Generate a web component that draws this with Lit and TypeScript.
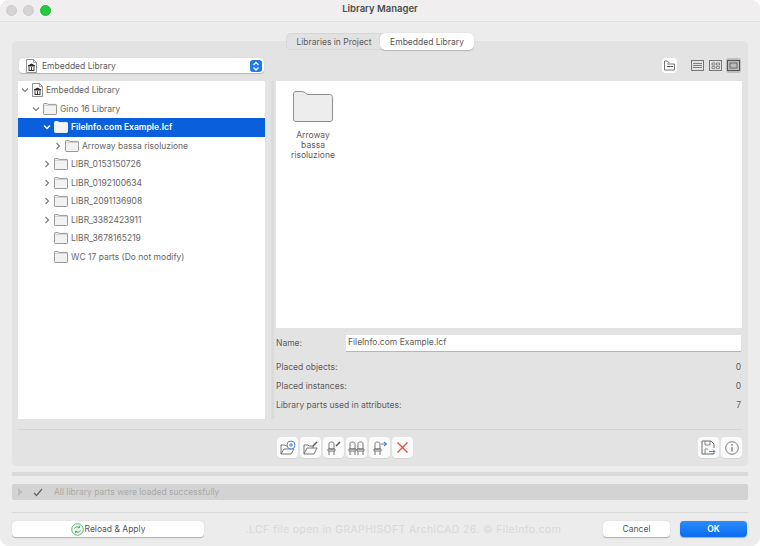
import { LitElement, html, css, svg } from "lit";
import { customElement } from "lit/decorators.js";

const LINE = "#6a6a6a";

const folder = (w: number, h: number, sel = false) => html`
  <svg class="ico" width=${w} height=${h} viewBox="0 0 14 12">
    <path d="M.5 2V1.2C.5.8.8.5 1.2.5h2.6c.5 0 .7.5 1.2.9h7.8c.4 0 .7.3.7.7v8.7c0 .4-.3.7-.7.7H1.2c-.4 0-.7-.3-.7-.7z"
      fill=${sel ? "#f4f4f4" : "#f2f2f2"} stroke=${sel ? "#fff" : "#808080"} stroke-width=".8" />
    <path d="M.5 2.4h13" stroke=${sel ? "#fff" : "#a8a8a8"} stroke-width=".5" />
  </svg>`;

const docIcon = html`
  <svg class="ico" width="11" height="14" viewBox="0 0 11 14">
    <path d="M.5.5h7l3 3v10H.5z" fill="#fff" stroke="#777" stroke-width=".8" />
    <path d="M7.5.5v3h3" fill="none" stroke="#777" stroke-width=".7" />
    <path d="M2 7l3.5-2L9 7zM2.5 11.5h6M3 8v3M5.5 8v3M8 8v3" fill="#222" stroke="#222" stroke-width=".9" />
  </svg>`;

const chevron = (open: boolean, sel = false) => html`
  <svg class="chev" width="8" height="8" viewBox="0 0 8 8">
    <path d=${open ? "M1 2.5l3 3 3-3" : "M2.5 1l3 3-3 3"} fill="none"
      stroke=${sel ? "#fff" : "#777"} stroke-width=${sel ? 1.5 : 1.1} />
  </svg>`;

const chair = (x = 0) => svg`
  <g transform="translate(${x} 0)" fill="none" stroke="${LINE}" stroke-width=".9">
    <path d="M3 3.5c0-2 5-2 5 0V9H3zM2 9h7v2H2zM3 11v4M8 11v4" />
  </g>`;

const toolIcons = [
  html`<svg width="16" height="15" viewBox="0 0 16 15"><path d="M1 14V5h4l1 1h1M1 14h10l3-5H4l-3 5" fill="none" stroke=${LINE} stroke-width=".9" /><circle cx="11" cy="5" r="4" fill="#fff" stroke="#4d86dc" /><path d="M11 3v4M9 5h4" stroke="#4d86dc" /></svg>`,
  html`<svg width="16" height="15" viewBox="0 0 16 15"><path d="M1 14V5h4l1 1h4v2M1 14h10l3-6H4l-3 6" fill="none" stroke=${LINE} stroke-width=".9" /><path d="M10 6l4-4" stroke="#555" stroke-width="1.4" /></svg>`,
  html`<svg width="16" height="15" viewBox="0 0 16 15">${chair(0)}<path d="M10 6l4-4" stroke="#555" stroke-width="1.4" /></svg>`,
  html`<svg width="18" height="15" viewBox="0 0 18 15">${chair(-1)}${chair(7)}</svg>`,
  html`<svg width="16" height="15" viewBox="0 0 16 15">${chair(0)}<path d="M9 4h5M12 2l2.500 2L12 6" fill="none" stroke="#4d86dc" stroke-width="1.100" /></svg>`,
  html`<svg width="13" height="13" viewBox="0 0 13 13"><path d="M1.500 1.500l10 10M11.500 1.500l-10 10" stroke="#f0483e" stroke-width="1.300" /></svg>`,
];

const saveIcon = html`<svg width="15" height="15" viewBox="0 0 15 15"><path d="M1 1h9l3 3v4M13 13v1H1V1" fill="none" stroke=${LINE} /><path d="M4 1v4h5V1M4 14V9h3" fill="none" stroke=${LINE} stroke-width=".8" /><path d="M8 11.500h6M12 9.500l2 2-2 2" fill="none" stroke="#4d86dc" /></svg>`;
const infoIcon = html`<svg width="14" height="14" viewBox="0 0 14 14"><circle cx="7" cy="7" r="6.300" fill="none" stroke=${LINE} stroke-width=".9" /><path d="M7 6v4.500" stroke=${LINE} stroke-width="1.200" /><circle cx="7" cy="3.900" r=".8" fill=${LINE} /></svg>`;

const tree = [
  { label: "Embedded Library", level: 0, open: true, doc: true },
  { label: "Gino 16 Library", level: 1, open: true },
  { label: "FileInfo.com Example.lcf", level: 2, open: true, selected: true },
  { label: "Arroway bassa risoluzione", level: 3, open: false },
  { label: "LIBR_0153150726", level: 2, open: false },
  { label: "LIBR_0192100634", level: 2, open: false },
  { label: "LIBR_2091136908", level: 2, open: false },
  { label: "LIBR_3382423911", level: 2, open: false },
  { label: "LIBR_3678165219", level: 2, leaf: true },
  { label: "WC 17 parts (Do not modify)", level: 2, leaf: true },
];

const stats = [
  ["Placed objects:", "0"],
  ["Placed instances:", "0"],
  ["Library parts used in attributes:", "7"],
];

@customElement("app-root")
export class AppRoot extends LitElement {
  static styles = css`
    :host {
      display: block;
      width: 760px;
      height: 546px;
      overflow: hidden;
      background: #fff;
      font-family: Inter, "Liberation Sans", sans-serif;
      font-size: 8.5px;
      color: #5c5c5c;
    }
    svg { display: block; flex: none; }
    .window {
      height: 546px;
      box-sizing: border-box;
      background: #ececec;
      border-radius: 9px;
      overflow: hidden;
      display: flex;
      flex-direction: column;
    }
    .titlebar {
      height: 21px;
      flex: none;
      background: #f0eeef;
      border-bottom: 1px solid #dfdfdf;
      display: flex;
      align-items: center;
      padding-left: 6px;
      gap: 6px;
      position: relative;
    }
    .light { width: 9px; height: 9px; border-radius: 50%; background: #d5d5d5; border: .5px solid #cacaca; }
    .light.green { background: #27c840; border-color: #22b838; }
    .title {
      position: absolute;
      left: 0; right: 0; top: 3px;
      text-align: center;
      font-size: 9.5px;
      font-weight: 600;
      color: #4d4d4d;
    }
    .tabs {
      align-self: center;
      margin: 11px 0 0 0;
      margin-left: 0;
      display: flex;
      height: 17px;
      box-sizing: border-box;
      background: #e2e2e2;
      border: 1px solid #d8d8d8;
      border-radius: 5px;
      position: relative;
      z-index: 1;
      transform: translateX(0);
    }
    .tab { width: 94px; display: flex; align-items: center; justify-content: center; }
    .tab.on {
      background: #fff;
      border-radius: 5px;
      margin: -1px;
      box-shadow: 0 .5px 1px #0003;
      color: #555;
    }
    .panel {
      margin: -9px 12px 0;
      height: 425px;
      flex: none;
      box-sizing: border-box;
      background: #e3e3e3;
      border-radius: 5px;
      padding: 17px 6px 0;
      display: flex;
      flex-direction: column;
    }
    .top { display: flex; height: 15px; margin-bottom: 8px; align-items: center; }
    .select {
      margin-left: 1px;
      width: 245px;
      height: 15px;
      box-sizing: border-box;
      background: #fff;
      border-radius: 4px;
      box-shadow: 0 .5px 1px #0003;
      display: flex;
      align-items: center;
      padding: 0 2px 0 7px;
      gap: 5px;
    }
    .select span { flex: 1; }
    .stepper {
      width: 12px; height: 12px;
      background: #1d78f2;
      border-radius: 3px;
    }
    .views { flex: 1; display: flex; justify-content: flex-end; align-items: center; gap: 3px; margin-right: 1px; }
    .up {
      width: 15px; height: 15px;
      background: #fff;
      border-radius: 4px;
      display: flex; align-items: center; justify-content: center;
      margin-right: 10px;
    }
    .view { width: 15px; height: 15px; display: flex; align-items: center; justify-content: center; }
    .view.on { background: #bcbcbc; border-radius: 3px; }
    .body { display: flex; height: 338px; }
    .tree { width: 247px; flex: none; background: #fff; }
    .row { height: 18.5px; display: flex; align-items: center; color: #666; white-space: nowrap; }
    .row.sel { background: #0a5fdc; color: #fff; font-weight: 600; }
    .chev-slot { width: 8px; flex: none; }
    .row .ico { margin: 0 3px 0 3px; }
    .split { width: 11px; flex: none; display: flex; justify-content: center; }
    .split i { display: block; width: 3px; margin-left: 3px; background: #dadada; }
    .right { flex: 1; display: flex; flex-direction: column; }
    .preview { height: 247px; background: #fff; flex: none; padding: 10px 0 0 8px; box-sizing: border-box; }
    .item { width: 58px; display: flex; flex-direction: column; align-items: center; text-align: center; line-height: 10px; gap: 8px; color: #5c5c5c; }
    .name { display: flex; align-items: center; height: 16px; margin-top: 7px; }
    .name label { width: 70px; flex: none; }
    .name div {
      flex: 1;
      margin-right: 1px;
      height: 16px;
      line-height: 15px;
      background: #fff;
      padding-left: 2px;
      box-shadow: 0 .5px .5px #0003;
    }
    .stat { display: flex; justify-content: space-between; height: 19.4px; align-items: center; padding-right: 1px; }
    .stats { margin-top: 6px; }
    .rule { height: 1px; background: #d6d6d6; margin-top: 10px; flex: none; }
    .tools { display: flex; align-items: center; justify-content: space-between; margin-top: 7px; padding-left: 259px; }
    .group { display: flex; gap: 2px; }
    .btn {
      width: 21px; height: 21px;
      background: #fbfbfb;
      border-radius: 4px;
      box-shadow: 0 .5px .5px #0002;
      display: flex; align-items: center; justify-content: center;
    }
    .strip { height: 4px; margin: 6px 12px 0; background: #dadada; flex: none; }
    .status {
      height: 16px;
      margin: 8px 12px 0;
      background: #d3d3d3;
      border-radius: 2px;
      display: flex;
      align-items: center;
      gap: 7px;
      padding-left: 5px;
      color: #aaa;
      flex: none;
    }
    .foot-rule { height: 1px; margin: 12px 12px 0; background: #d9d9d9; flex: none; }
    .footer { display: flex; align-items: center; height: 16px; margin: 8px 13px 0 12px; }
    .push {
      height: 16px;
      box-sizing: border-box;
      background: #fff;
      border-radius: 4px;
      box-shadow: 0 .5px 1px #0004;
      display: flex; align-items: center; justify-content: center;
      color: #555;
    }
    .reload { width: 192px; gap: 1px; }
    .mark { flex: 1; text-align: center; color: #d9d9d9; font-size: 10.5px; letter-spacing: .35px; white-space: nowrap; }
    .cancel { width: 67px; margin-right: 10px; }
    .ok { width: 67px; background: linear-gradient(#2a8bfb, #0a6cf0); color: #fff; font-weight: 600; }
  `;

  renderRow(r: (typeof tree)[number]) {
    const sel = !!r.selected;
    return html`
      <div class="row ${sel ? "sel" : ""}" style="padding-left:${3 + r.level * 11}px">
        ${r.leaf ? html`<div class="chev-slot"></div>` : chevron(!!r.open, sel)}
        ${r.doc ? docIcon : folder(14, 12, sel)}
        <span>${r.label}</span>
      </div>`;
  }

  render() {
    return html`
      <div class="window">
        <div class="titlebar">
          <div class="light"></div><div class="light"></div><div class="light green"></div>
          <div class="title">Library Manager</div>
        </div>
        <div class="tabs">
          <div class="tab">Libraries in Project</div>
          <div class="tab on">Embedded Library</div>
        </div>
        <div class="panel">
          <div class="top">
            <div class="select">
              ${docIcon}
              <span>Embedded Library</span>
              <div class="stepper">
                <svg width="12" height="12" viewBox="0 0 12 12"><path d="M3.500 5L6 2.500 8.500 5M3.500 7.500L6 10l2.500-2.500" fill="none" stroke="#fff" stroke-width="1.300" /></svg>
              </div>
            </div>
            <div class="views">
              <div class="up">
                <svg width="11" height="11" viewBox="0 0 11 11"><path d="M.5 10V1h3l1 1.500h1M.5 10h10V4H3" fill="none" stroke="#555" stroke-width=".8" /><path d="M3 6.500h6" stroke="#555" /></svg>
              </div>
              <div class="view">
                <svg width="13" height="11" viewBox="0 0 13 11"><rect x=".5" y=".5" width="12" height="10" fill="#e3e3e3" stroke="#777" /><path d="M2 3.500h9M2 5.500h9M2 7.500h9" stroke="#666" stroke-width=".8" /></svg>
              </div>
              <div class="view">
                <svg width="13" height="11" viewBox="0 0 13 11"><rect x=".5" y=".5" width="12" height="10" fill="#e3e3e3" stroke="#777" /><path d="M3 3h3v2H3zM7.500 3h3v2h-3zM3 6.500h3v2H3zM7.500 6.500h3v2h-3z" fill="none" stroke="#666" stroke-width=".7" /></svg>
              </div>
              <div class="view on">
                <svg width="13" height="11" viewBox="0 0 13 11"><rect x=".5" y=".5" width="12" height="10" fill="none" stroke="#555" /><rect x="3" y="3" width="7" height="5" fill="none" stroke="#555" stroke-width=".8" /></svg>
              </div>
            </div>
          </div>
          <div class="body">
            <div class="tree">${tree.map((r) => this.renderRow(r))}</div>
            <div class="split"><i></i></div>
            <div class="right">
              <div class="preview">
                <div class="item">
                  <svg width="40" height="31" viewBox="0 0 40 31">
                    <path d="M.5 3c0-1.500 1-2.500 2.500-2.500h6c3 0 4 3 6 3h21.500c2 0 3 1 3 3V28c0 1.500-1 2.500-2.500 2.500H3C1.500 30.500.5 29.500.5 28z" fill="#ededed" stroke="#8e8e8e" />
                  </svg>
                  <div>Arroway bassa<br />risoluzione</div>
                </div>
              </div>
              <div class="name"><label>Name:</label><div>FileInfo.com Example.lcf</div></div>
              <div class="stats">
                ${stats.map(([k, v]) => html`<div class="stat"><span>${k}</span><span>${v}</span></div>`)}
              </div>
            </div>
          </div>
          <div class="rule"></div>
          <div class="tools">
            <div class="group">${toolIcons.map((i) => html`<div class="btn">${i}</div>`)}</div>
            <div class="group"><div class="btn">${saveIcon}</div><div class="btn">${infoIcon}</div></div>
          </div>
        </div>
        <div class="strip"></div>
        <div class="status">
          <svg width="7" height="8" viewBox="0 0 7 8"><path d="M1 0l5 4-5 4z" fill="#bdbdbd" /></svg>
          <svg width="10" height="9" viewBox="0 0 10 9" style="margin-left:2px"><path d="M1 5l2.500 2.500L9 1" fill="none" stroke="#666" stroke-width="1.200" /></svg>
          <span style="margin-left:4px">All library parts were loaded successfully</span>
        </div>
        <div class="foot-rule"></div>
        <div class="footer">
          <div class="push reload">
            <svg width="13" height="13" viewBox="0 0 13 13"><circle cx="6.500" cy="6.500" r="5.800" fill="#e9f6ec" stroke="#46a85f" stroke-width=".8" /><path d="M3.500 5.500c.5-1.500 3-2.500 5-1M8.500 2.800v1.900H6.700M9.500 7.500c-.5 1.500-3 2.500-5 1M4.500 10.200V8.300h1.800" fill="none" stroke="#3a9a52" stroke-width=".8" /></svg>
            Reload &amp; Apply
          </div>
          <div class="mark">.LCF file open in GRAPHISOFT ArchiCAD 26. © FileInfo.com</div>
          <div class="push cancel">Cancel</div>
          <div class="push ok">OK</div>
        </div>
      </div>
    `;
  }
}
